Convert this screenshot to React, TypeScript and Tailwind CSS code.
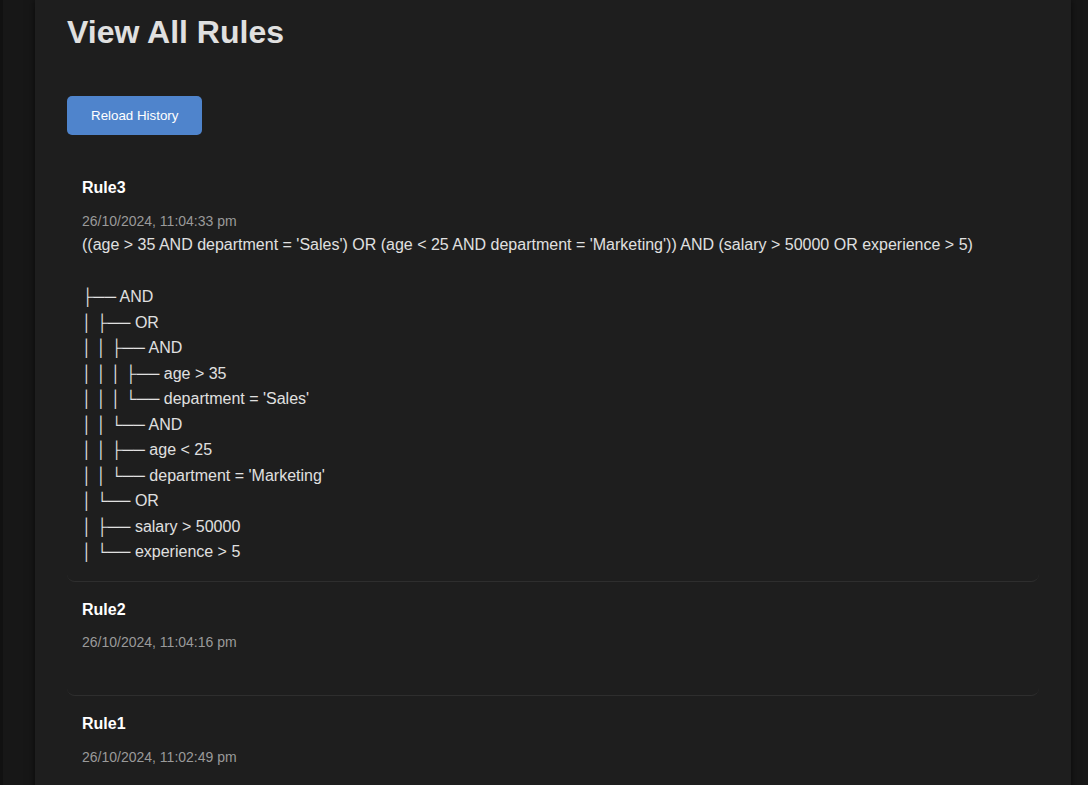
import React from "react";

type Rule = {
  id: number;
  name: string;
  createdAt: string;
  expression: string;
  tree: string[];
};

const rules: Rule[] = [
  {
    id: 3,
    name: "Rule3",
    createdAt: "26/10/2024, 11:04:33 pm",
    expression:
      "((age > 35 AND department = 'Sales') OR (age < 25 AND department = 'Marketing')) AND (salary > 50000 OR experience > 5)",
    tree: [
      "├── AND",
      "│ ├── OR",
      "│ │ ├── AND",
      "│ │ │ ├── age > 35",
      "│ │ │ └── department = 'Sales'",
      "│ │ └── AND",
      "│ │ ├── age < 25",
      "│ │ └── department = 'Marketing'",
      "│ └── OR",
      "│ ├── salary > 50000",
      "│ └── experience > 5",
    ],
  },
  { id: 2, name: "Rule2", createdAt: "26/10/2024, 11:04:16 pm", expression: "", tree: [] },
  { id: 1, name: "Rule1", createdAt: "26/10/2024, 11:02:49 pm", expression: "", tree: [] },
];

const RuleCard = ({ rule }: { rule: Rule }) => (
  <div className="rounded-lg border-b border-[#2e2e2e] px-[15px] pt-[15px] pb-[16px]">
    <h3 className="text-base leading-[25.6px] font-bold text-white mb-[9px]">{rule.name}</h3>
    <p className="text-sm leading-[22.4px] text-[#9a9a9a]">{rule.createdAt}</p>
    <div className="text-base leading-[25.5px] text-[#e0e0e0] min-h-[25.5px]">
      {rule.expression && <div>{rule.expression}</div>}
      {rule.tree.length > 0 && (
        <div className="mt-[26.5px]">
          {rule.tree.map((line, i) => (
            <div key={i}>{line}</div>
          ))}
        </div>
      )}
    </div>
  </div>
);

export default function App() {
  return (
    <div className="min-h-screen bg-[#171717] border-l-[3px] border-[#111111] font-['Liberation_Sans',Arial,sans-serif]">
      <div className="ml-[32px] w-[1036px] min-h-screen bg-[#1e1e1e] shadow-[0_0_8px_rgba(0,0,0,0.6)] px-8 pt-3 pb-8">
        <h1 className="text-[32px] leading-[40px] font-bold text-[#e0e0e0]">View All Rules</h1>
        <button className="mt-[44px] h-[39px] px-6 rounded-[5px] bg-[#4f84cc] text-white text-[13.33px]">
          Reload History
        </button>
        <div className="mt-[25px]">
          {rules.map((rule) => (
            <RuleCard key={rule.id} rule={rule} />
          ))}
        </div>
      </div>
    </div>
  );
}
